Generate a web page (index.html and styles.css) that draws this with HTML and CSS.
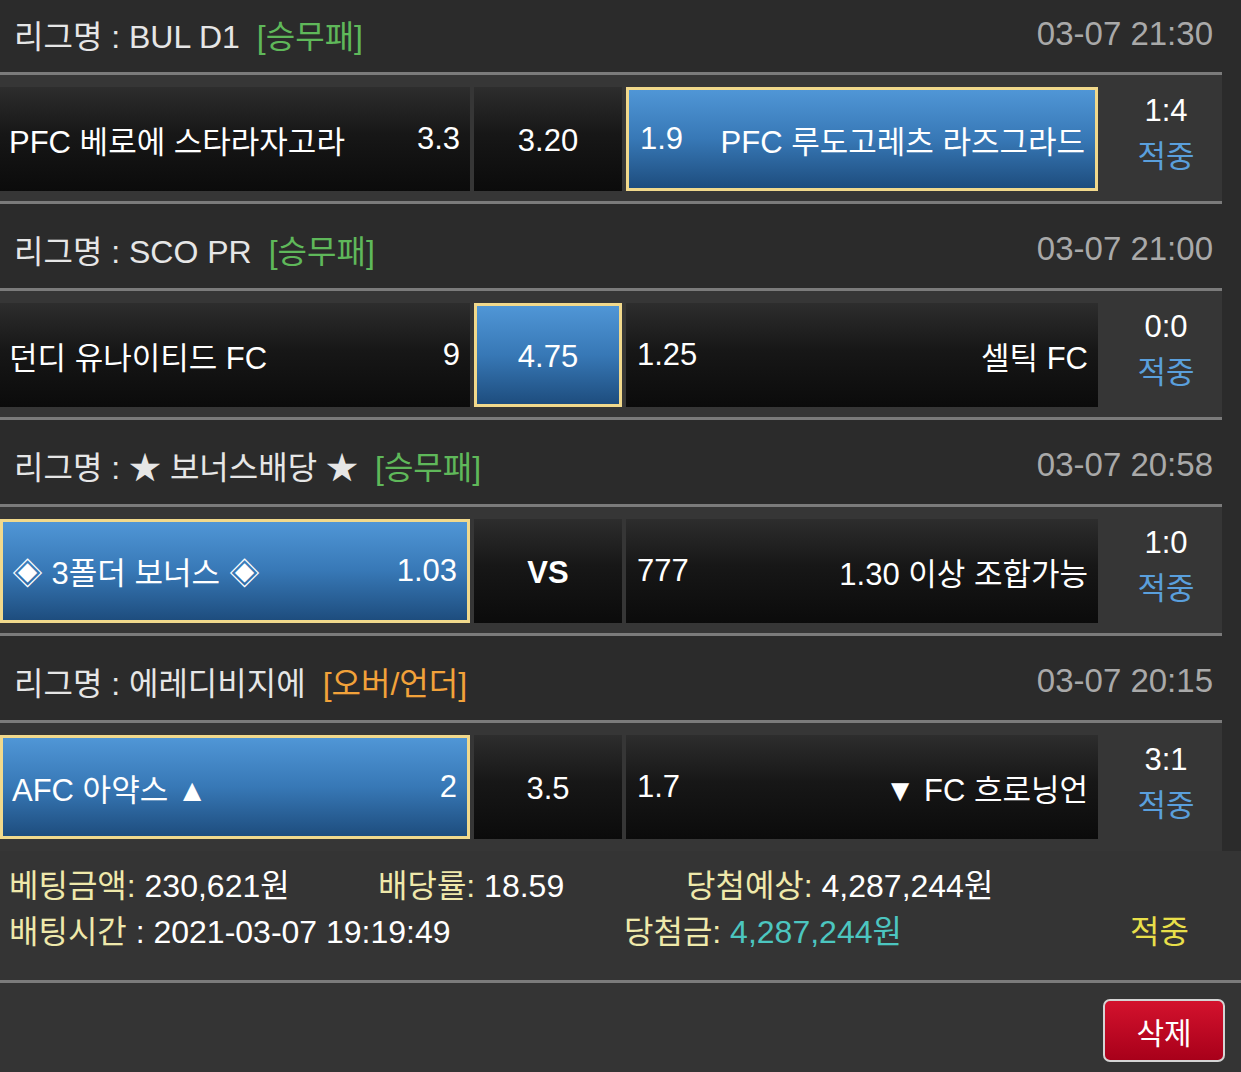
FILE: index.html
```html
<!DOCTYPE html>
<html lang="ko">
<head>
<meta charset="utf-8">
<title>배팅내역</title>
<link rel="stylesheet" href="styles.css">
</head>
<body>
<div class="page">
  <div class="list">
    <div class="league first">
      <span class="lname">리그명 : BUL D1</span><span class="ltype green">[승무패]</span>
      <span class="date">03-07 21:30</span>
    </div>
    <div class="match">
      <div class="cell home"><span>PFC 베로에 스타라자고라</span><span>3.3</span></div>
      <div class="cell draw"><span>3.20</span></div>
      <div class="cell away sel"><span>1.9</span><span>PFC 루도고레츠 라즈그라드</span></div>
      <div class="result"><span class="score">1:4</span><span class="hit">적중</span></div>
    </div>

    <div class="league">
      <span class="lname">리그명 : SCO PR</span><span class="ltype green">[승무패]</span>
      <span class="date">03-07 21:00</span>
    </div>
    <div class="match">
      <div class="cell home"><span>던디 유나이티드 FC</span><span>9</span></div>
      <div class="cell draw sel"><span>4.75</span></div>
      <div class="cell away"><span>1.25</span><span>셀틱 FC</span></div>
      <div class="result"><span class="score">0:0</span><span class="hit">적중</span></div>
    </div>

    <div class="league">
      <span class="lname">리그명 : ★ 보너스배당 ★</span><span class="ltype green">[승무패]</span>
      <span class="date">03-07 20:58</span>
    </div>
    <div class="match">
      <div class="cell home sel"><span>◈ 3폴더 보너스 ◈</span><span>1.03</span></div>
      <div class="cell draw"><span class="vs">VS</span></div>
      <div class="cell away"><span>777</span><span>1.30 이상 조합가능</span></div>
      <div class="result"><span class="score">1:0</span><span class="hit">적중</span></div>
    </div>

    <div class="league">
      <span class="lname">리그명 : 에레디비지에</span><span class="ltype orange">[오버/언더]</span>
      <span class="date">03-07 20:15</span>
    </div>
    <div class="match last">
      <div class="cell home sel"><span>AFC 아약스 ▲</span><span>2</span></div>
      <div class="cell draw"><span>3.5</span></div>
      <div class="cell away"><span>1.7</span><span>▼ FC 흐로닝언</span></div>
      <div class="result"><span class="score">3:1</span><span class="hit">적중</span></div>
    </div>
  </div>

  <div class="summary">
    <div class="srow one">
      <span><b>베팅금액:</b> 230,621원</span>
      <span><b>배당률:</b> 18.59</span>
      <span><b>당첨예상:</b> 4,287,244원</span>
    </div>
    <div class="srow two">
      <span><b>배팅시간</b> : 2021-03-07 19:19:49</span>
      <span><b>당첨금:</b> <em class="win">4,287,244원</em></span>
      <span class="status">적중</span>
    </div>
  </div>

  <div class="actions">
    <button class="del" type="button">삭제</button>
  </div>
</div>
</body>
</html>
```

FILE: styles.css
```css
* { box-sizing: border-box; }

html, body {
  margin: 0;
  padding: 0;
  background: #2b2b2b;
}

body {
  font-family: "Liberation Sans", "Noto Sans CJK KR", sans-serif;
  color: #ffffff;
  width: 1241px;
  height: 1072px;
  overflow: hidden;
}

.page {
  display: flex;
  flex-direction: column;
}

.list {
  width: 1222px;
  display: flex;
  flex-direction: column;
}

.league {
  height: 87px;
  padding: 5px 9px 0 14px;
  display: flex;
  align-items: center;
  background: #2b2b2b;
  border-bottom: 3px solid #7b7b7b;
  font-size: 32px;
  color: #e6e6e6;
}

.league.first {
  height: 75px;
  padding-top: 0;
  padding-bottom: 5px;
}

.ltype {
  margin-left: 17px;
}

.green { color: #5fb85a; }
.orange { color: #f2a23a; }

.date {
  margin-left: auto;
  color: #a9a9a9;
  font-size: 33px;
}

.match {
  height: 129px;
  padding: 12px 0 10px;
  display: flex;
  background: #363636;
  border-bottom: 3px solid #7b7b7b;
}

.match.last {
  border-bottom: none;
  height: 128px;
}

.cell {
  height: 104px;
  display: flex;
  align-items: center;
  justify-content: space-between;
  background: linear-gradient(#2d2d2d 0%, #171717 45%, #0b0b0b 100%);
  font-size: 31px;
  color: #ffffff;
  padding: 0 10px 0 9px;
}

.home { width: 470px; }

.draw {
  width: 148px;
  margin-left: 4px;
  justify-content: center;
  padding: 4px 0 0;
}

.away {
  width: 472px;
  margin-left: 4px;
  padding-left: 11px;
}

.cell.sel {
  background: linear-gradient(#5096d6 0%, #3778b6 50%, #1e4d7e 100%);
  border: 3px solid #f1d98c;
}

.vs {
  font-weight: bold;
}

.result {
  width: 124px;
  display: flex;
  flex-direction: column;
  align-items: center;
  justify-content: center;
  padding: 0 0 10px 12px;
  font-size: 31px;
  line-height: 46px;
}

.score { color: #ffffff; }
.hit { color: #5a9fdc; }

.summary {
  background: #343434;
  padding: 12px 0 0 9px;
  height: 132px;
  border-bottom: 3px solid #7b7b7b;
  font-size: 32px;
  color: #ffffff;
}

.srow {
  display: grid;
  line-height: 46px;
  white-space: nowrap;
}

.srow.one { grid-template-columns: 369px 308px 1fr; }
.srow.two { grid-template-columns: 615px 506px 1fr; }

.srow b {
  font-weight: normal;
  color: #efe9ab;
}

.srow em {
  font-style: normal;
}

.win { color: #4cc6c0; }
.status { color: #e8df4a; }

.actions {
  background: #343434;
  height: 93px;
  display: flex;
  justify-content: flex-end;
  align-items: flex-start;
  padding: 16px 16px 0 0;
}

.del {
  width: 122px;
  height: 63px;
  border: 2px solid #d4d4d4;
  border-radius: 7px;
  background: linear-gradient(#d3122d, #a8001a);
  color: #ffffff;
  font-family: "Liberation Sans", "Noto Sans CJK KR", sans-serif;
  font-size: 30px;
  padding: 0;
}
```
